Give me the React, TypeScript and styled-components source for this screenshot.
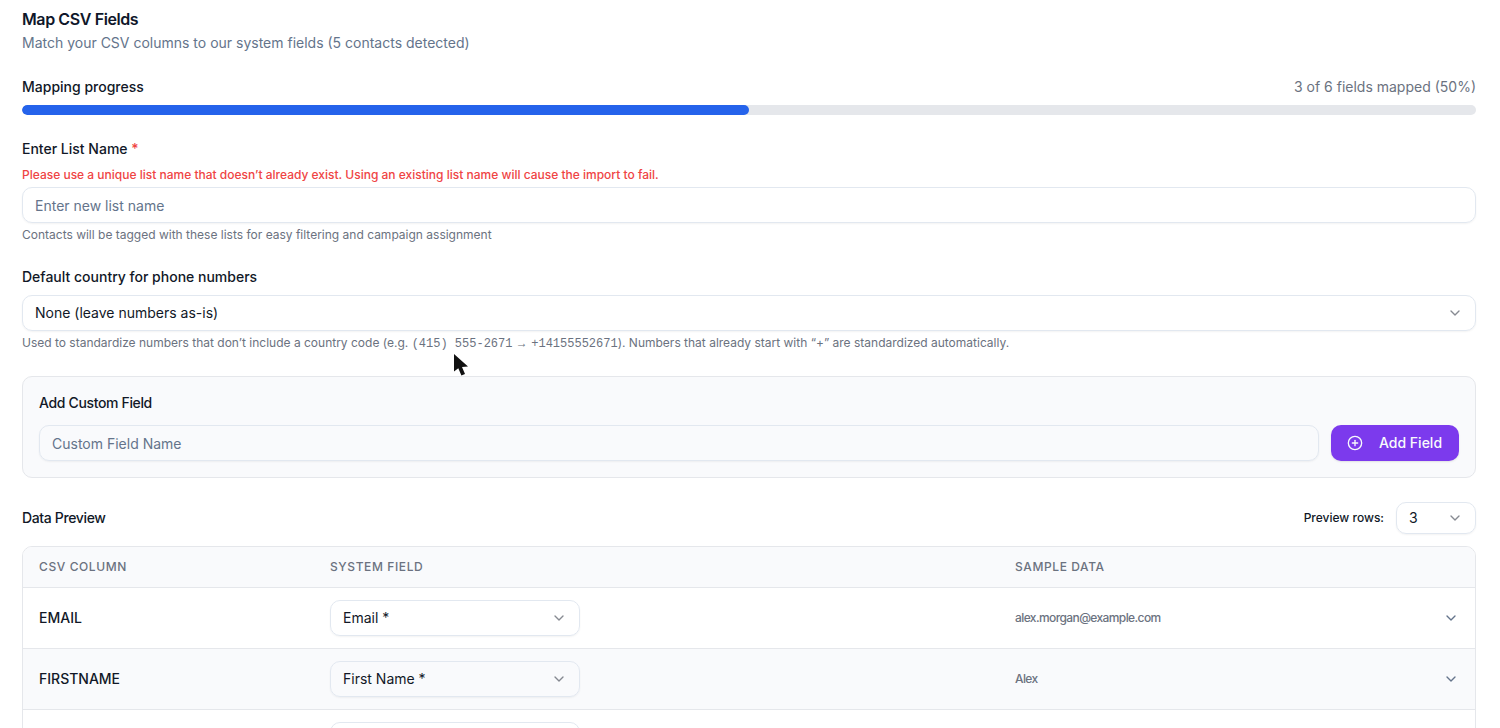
import React, { useId, useState } from "react";
import styled, { createGlobalStyle } from "styled-components";
import { ChevronDown, CirclePlus } from "lucide-react";

const GlobalStyle = createGlobalStyle`
  *, *::before, *::after { box-sizing: border-box; }
  body {
    margin: 0;
    background: #ffffff;
    color: #111827;
    font-family: Inter, "Liberation Sans", sans-serif;
    font-size: 14px;
    line-height: 20px;
  }
  h2, h3, p { margin: 0; }
  button, input, select { font: inherit; color: inherit; }
`;

const Page = styled.main`
  display: flex;
  flex-direction: column;
  gap: 24px;
  height: 100vh;
  overflow: hidden;
  padding: 7px 24px 0 22px;

  & > * { flex-shrink: 0; }
`;

const Header = styled.header`
  display: flex;
  flex-direction: column;
  gap: 2px;
`;

const Title = styled.h2`
  color: #0f172a;
  font-size: 16px;
  line-height: 24px;
  font-weight: 600;
  letter-spacing: -0.025em;
`;

const Subtitle = styled.p`
  color: #64748b;
`;

const Section = styled.section`
  display: flex;
  flex-direction: column;
  gap: 8px;
`;

const Spread = styled.div`
  display: flex;
  align-items: center;
  justify-content: space-between;
`;

const Strong = styled.span`
  font-weight: 500;
`;

const Muted = styled.span`
  color: #6b7280;
`;

const Track = styled.div`
  height: 10px;
  overflow: hidden;
  border-radius: 5px;
  background: #e5e7eb;
`;

const Fill = styled.div`
  height: 100%;
  border-radius: 5px;
  background: #2563eb;
`;

const FieldGroup = styled.div`
  display: flex;
  flex-direction: column;
  gap: 4px;
`;

const Label = styled.label<{ $small?: boolean }>`
  font-weight: 500;
  font-size: ${(p) => (p.$small ? 12 : 14)}px;
`;

const Required = styled.span`
  color: #ef4444;
`;

const Note = styled.p<{ $error?: boolean }>`
  color: ${(p) => (p.$error ? "#ef4444" : "#6b7280")};
  font-size: 12px;
  line-height: 16px;
  font-weight: ${(p) => (p.$error ? 500 : 400)};
`;

const Code = styled.code`
  font-family: "Liberation Mono", monospace;
  font-size: 12px;
`;

const Arrow = styled.span`
  font-family: "Liberation Sans", sans-serif;
`;

const TextInput = styled.input`
  flex: 1 1 auto;
  min-width: 0;
  height: 36px;
  min-height: 36px;
  padding: 0 12px;
  border: 1px solid #e2e8f0;
  border-radius: 10px;
  background: transparent;
  box-shadow: 0 1px 2px rgba(0, 0, 0, 0.05);

  &::placeholder { color: #64748b; opacity: 1; }
`;

const SelectBox = styled.div<{ $width: string; $height: number }>`
  position: relative;
  width: ${(p) => p.$width};
  height: ${(p) => p.$height}px;
`;

const NativeSelect = styled.select`
  appearance: none;
  display: block;
  width: 100%;
  height: 100%;
  padding: 0 36px 0 12px;
  border: 1px solid #e2e8f0;
  border-radius: 10px;
  background: transparent;
  box-shadow: 0 1px 2px rgba(0, 0, 0, 0.05);
`;

const SelectArrow = styled(ChevronDown)`
  position: absolute;
  right: 13px;
  top: calc(50% - 8px);
  opacity: 0.5;
  pointer-events: none;
`;

const Card = styled.section`
  display: flex;
  flex-direction: column;
  gap: 12px;
  padding: 16px;
  border: 1px solid #e5e7eb;
  border-radius: 10px;
  background: #f9fafc;
`;

const Heading = styled.h3`
  font-size: 14px;
  line-height: 20px;
  font-weight: 500;
  letter-spacing: -0.025em;
`;

const Row = styled.div`
  display: flex;
  align-items: center;
  gap: 12px;
`;

const PrimaryButton = styled.button`
  display: inline-flex;
  align-items: center;
  gap: 16px;
  height: 36px;
  min-width: 128px;
  padding: 0 16px;
  border: 0;
  border-radius: 10px;
  background: #7c3aed;
  color: #f8fafc;
  font-weight: 500;
  white-space: nowrap;
  box-shadow: 0 1px 2px rgba(0, 0, 0, 0.1);
`;

const Preview = styled.section`
  display: flex;
  flex-direction: column;
  gap: 12px;
`;

const TableFrame = styled.div`
  overflow: hidden;
  border: 1px solid #e5e7eb;
  border-radius: 10px;
`;

const Table = styled.table`
  width: 100%;
  table-layout: fixed;
  border-collapse: separate;
  border-spacing: 0;
`;

const HeadCell = styled.th<{ $width?: string }>`
  width: ${(p) => p.$width ?? "auto"};
  padding: 12px 16px;
  border-bottom: 1px solid #e5e7eb;
  background: #f9fafc;
  color: #6b7280;
  font-size: 12px;
  line-height: 16px;
  font-weight: 500;
  letter-spacing: 0.05em;
  text-align: left;
  text-transform: uppercase;
`;

const BodyRow = styled.tr`
  &:nth-child(even) { background: #f9fafc; }
`;

const Cell = styled.td<{ $kind?: "name" | "sample" }>`
  padding: 12px 16px;
  border-bottom: 1px solid #e5e7eb;
  vertical-align: middle;
  font-weight: ${(p) => (p.$kind ? 500 : 400)};
  ${(p) =>
    p.$kind === "sample" &&
    `
    color: #6b7280;
    font-size: 12px;
    line-height: 16px;
    letter-spacing: -0.05em;
  `}
`;

const ExpandButton = styled.button`
  display: flex;
  width: 16px;
  height: 16px;
  padding: 0;
  border: 0;
  background: none;
  color: #64748b;
`;

const Pointer = styled.svg`
  position: fixed;
  left: 453px;
  top: 353px;
  pointer-events: none;
`;

interface SelectProps {
  id?: string;
  label?: string;
  options: string[];
  width?: string;
  height?: number;
}

function Select({ id, label, options, width = "100%", height = 36 }: SelectProps) {
  return (
    <SelectBox $width={width} $height={height}>
      <NativeSelect id={id} aria-label={label}>
        {options.map((option) => (
          <option key={option}>{option}</option>
        ))}
      </NativeSelect>
      <SelectArrow size={16} aria-hidden />
    </SelectBox>
  );
}

const columns = [
  { name: "EMAIL", field: "Email *", sample: "alex.morgan@example.com" },
  { name: "FIRSTNAME", field: "First Name *", sample: "Alex" },
  { name: "LASTNAME", field: "Last Name", sample: "Morgan" },
];

const totalFields = 6;

export default function App() {
  const ids = useId();
  const [listName, setListName] = useState("");
  const [customField, setCustomField] = useState("");
  const percent = Math.round((columns.length / totalFields) * 100);

  return (
    <>
      <GlobalStyle />
      <Page>
        <Header>
          <Title>Map CSV Fields</Title>
          <Subtitle>Match your CSV columns to our system fields (5 contacts detected)</Subtitle>
        </Header>

        <Section>
          <Spread>
            <Strong>Mapping progress</Strong>
            <Muted>{`${columns.length} of ${totalFields} fields mapped (${percent}%)`}</Muted>
          </Spread>
          <Track role="progressbar" aria-label="Mapping progress" aria-valuenow={percent}>
            <Fill style={{ width: `${percent}%` }} />
          </Track>
        </Section>

        <Section>
          <Label htmlFor={`${ids}list`}>
            Enter List Name <Required>*</Required>
          </Label>
          <FieldGroup>
            <Note $error>
              Please use a unique list name that doesn’t already exist. Using an existing list name
              will cause the import to fail.
            </Note>
            <TextInput
              id={`${ids}list`}
              placeholder="Enter new list name"
              value={listName}
              onChange={(e) => setListName(e.target.value)}
            />
            <Note>Contacts will be tagged with these lists for easy filtering and campaign assignment</Note>
          </FieldGroup>
        </Section>

        <Section>
          <Label htmlFor={`${ids}country`}>Default country for phone numbers</Label>
          <FieldGroup>
            <Select id={`${ids}country`} options={["None (leave numbers as-is)"]} />
            <Note>
              Used to standardize numbers that don’t include a country code (e.g.{" "}
              <Code>(415) 555-2671</Code> <Arrow>→</Arrow> <Code>+14155552671</Code>). Numbers that
              already start with “+” are standardized automatically.
            </Note>
          </FieldGroup>
        </Section>

        <Card>
          <Heading>Add Custom Field</Heading>
          <Row>
            <TextInput
              aria-label="Custom Field Name"
              placeholder="Custom Field Name"
              value={customField}
              onChange={(e) => setCustomField(e.target.value)}
            />
            <PrimaryButton type="button">
              <CirclePlus size={16} aria-hidden />
              Add Field
            </PrimaryButton>
          </Row>
        </Card>

        <Preview>
          <Spread>
            <Heading>Data Preview</Heading>
            <Row>
              <Label $small htmlFor={`${ids}rows`}>
                Preview rows:
              </Label>
              <Select id={`${ids}rows`} options={["3", "5", "10"]} width="80px" height={32} />
            </Row>
          </Spread>
          <TableFrame>
            <Table>
              <thead>
                <tr>
                  <HeadCell $width="291px">CSV Column</HeadCell>
                  <HeadCell>System Field</HeadCell>
                  <HeadCell $width="428px">Sample Data</HeadCell>
                  <HeadCell $width="48px" aria-label="Expand" />
                </tr>
              </thead>
              <tbody>
                {columns.map((column) => (
                  <BodyRow key={column.name}>
                    <Cell $kind="name">{column.name}</Cell>
                    <Cell>
                      <Select
                        label={`System field for ${column.name}`}
                        options={[column.field]}
                        width="250px"
                      />
                    </Cell>
                    <Cell $kind="sample">{column.sample}</Cell>
                    <Cell>
                      <ExpandButton type="button" aria-label={`Show samples for ${column.name}`}>
                        <ChevronDown size={16} aria-hidden />
                      </ExpandButton>
                    </Cell>
                  </BodyRow>
                ))}
              </tbody>
            </Table>
          </TableFrame>
        </Preview>
      </Page>
      <Pointer width="16" height="24" viewBox="0 0 16 24" aria-hidden>
        <path d="M1 1 L1 18.5 L5.3 15.2 L8.4 22.4 L12 20.9 L9 14 L15 13.5 Z" fill="#111111" />
      </Pointer>
    </>
  );
}
